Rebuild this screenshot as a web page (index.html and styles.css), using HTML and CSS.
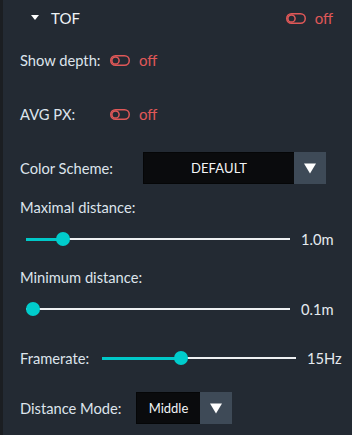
FILE: index.html
```html
<!DOCTYPE html>
<html>
<head>
<meta charset="utf-8">
<link rel="stylesheet" href="styles.css">
</head>
<body>
<div class="panel">
  <div class="header">
    <span class="caret"></span>
    <span class="title">TOF</span>
    <span class="spacer"></span>
    <span class="toggle"><svg width="20" height="11" viewBox="0 0 20 11"><rect x="0.75" y="0.75" width="18.5" height="9.5" rx="4.75" fill="none" stroke="currentColor" stroke-width="1.5"/><circle cx="5.5" cy="5.5" r="3.6" fill="none" stroke="currentColor" stroke-width="1.5"/></svg><span class="off">off</span></span>
  </div>

  <div class="row r-depth">
    <span class="label w-toggle">Show depth:</span>
    <span class="toggle"><svg width="20" height="11" viewBox="0 0 20 11"><rect x="0.75" y="0.75" width="18.5" height="9.5" rx="4.75" fill="none" stroke="currentColor" stroke-width="1.5"/><circle cx="5.5" cy="5.5" r="3.6" fill="none" stroke="currentColor" stroke-width="1.5"/></svg><span class="off">off</span></span>
  </div>

  <div class="row r-avg">
    <span class="label w-toggle">AVG PX:</span>
    <span class="toggle"><svg width="20" height="11" viewBox="0 0 20 11"><rect x="0.75" y="0.75" width="18.5" height="9.5" rx="4.75" fill="none" stroke="currentColor" stroke-width="1.5"/><circle cx="5.5" cy="5.5" r="3.6" fill="none" stroke="currentColor" stroke-width="1.5"/></svg><span class="off">off</span></span>
  </div>

  <div class="row r-scheme">
    <span class="label w-scheme">Color Scheme:</span>
    <div class="select wide">
      <span class="value caps">DEFAULT</span>
      <span class="arrow"><svg width="12" height="11" viewBox="0 0 12 11"><path d="M0 0.5 H12 L6 10.5 Z" fill="#fff"/></svg></span>
    </div>
  </div>

  <div class="row r-maxlabel"><span class="label">Maximal distance:</span></div>
  <div class="row slider-row r-maxslider">
    <div class="track"><div class="fill" style="width:37px"></div><div class="thumb" style="left:30px"></div></div>
    <span class="sval">1.0m</span>
  </div>

  <div class="row r-minlabel"><span class="label">Minimum distance:</span></div>
  <div class="row slider-row r-minslider">
    <div class="track"><div class="fill" style="width:0px"></div><div class="thumb" style="left:0px"></div></div>
    <span class="sval">0.1m</span>
  </div>

  <div class="row r-fps">
    <span class="label w-fps">Framerate:</span>
    <div class="track"><div class="fill" style="width:79px"></div><div class="thumb" style="left:72px"></div></div>
    <span class="sval fps-val">15Hz</span>
  </div>

  <div class="row r-mode">
    <span class="label w-mode">Distance Mode:</span>
    <div class="select narrow">
      <span class="value">Middle</span>
      <span class="arrow"><svg width="12" height="11" viewBox="0 0 12 11"><path d="M0 0.5 H12 L6 10.5 Z" fill="#fff"/></svg></span>
    </div>
  </div>
</div>
</body>
</html>
```

FILE: styles.css
```css
* { box-sizing: border-box; }
html, body {
  margin: 0;
  padding: 0;
  width: 352px;
  height: 435px;
  overflow: hidden;
  background: #1b1e22;
  font-family: Lato, "Noto Sans", sans-serif;
  font-size: 14.7px;
  color: #dde4ec;
}
.panel {
  margin-left: 3px;
  height: 435px;
  background: #232a33;
  padding: 0 0 0 17px;
  display: flex;
  flex-direction: column;
}
.header {
  height: 36px;
  display: flex;
  align-items: center;
  padding-right: 19px;
}
.caret {
  margin-left: 11px;
  width: 0;
  height: 0;
  border-left: 4px solid transparent;
  border-right: 4px solid transparent;
  border-top: 5px solid #ffffff;
  margin-top: -1px;
}
.title {
  margin-left: 12px;
  color: #eef2f6;
  font-size: 15px;
}
.spacer { flex: 1; }
.toggle {
  display: flex;
  align-items: center;
  color: #e05858;
}
.toggle svg { display: block; }
.off {
  margin-left: 9px;
  color: #e05858;
  font-size: 15px;
}
.row {
  display: flex;
  align-items: center;
}
.label { white-space: nowrap; }
.w-toggle { width: 90px; }
.w-scheme { width: 123px; }
.w-fps { width: 82px; }
.w-mode { width: 116px; }

.r-depth { height: 24px; margin-top: 12px; }
.r-avg { height: 24px; margin-top: 30px; }
.r-scheme { height: 32px; margin-top: 26px; }
.r-maxlabel { height: 20px; margin-top: 13px; }
.r-maxslider { height: 20px; margin-top: 12px; }
.r-minlabel { height: 20px; margin-top: 18px; }
.r-minslider { height: 20px; margin-top: 12px; }
.r-fps { height: 20px; margin-top: 29px; }
.r-mode { height: 32px; margin-top: 24px; }

.select {
  height: 32px;
  display: flex;
  background: #0a0b0d;
  border: 1px solid #050607;
}
.select .value {
  flex: 1;
  display: flex;
  align-items: center;
  justify-content: center;
  color: #f2f4f6;
  font-size: 13px;
}
.select .caps { letter-spacing: 0.1px; }
.select .arrow {
  width: 32px;
  background: #3e4a57;
  display: flex;
  align-items: center;
  justify-content: center;
  margin: -1px -1px -1px 0;
}
.wide { width: 183px; }
.narrow { width: 96px; }

.slider-row { padding-left: 6px; }
.slider-row .track { width: 264px; flex: none; }
.r-fps .track { width: 194px; flex: none; }
.track {
  position: relative;
  height: 14px;
}
.track::before {
  content: "";
  position: absolute;
  left: 0;
  right: 0;
  top: 6px;
  height: 2px;
  background: #eef0f2;
}
.fill {
  position: absolute;
  left: 0;
  top: 5.5px;
  height: 3px;
  background: #00c8c8;
}
.thumb {
  position: absolute;
  top: 0;
  width: 14px;
  height: 14px;
  border-radius: 50%;
  background: #00cccc;
}
.sval {
  margin-left: 11px;
  color: #e6ebf0;
}
.fps-val { margin-left: 11px; }
```
